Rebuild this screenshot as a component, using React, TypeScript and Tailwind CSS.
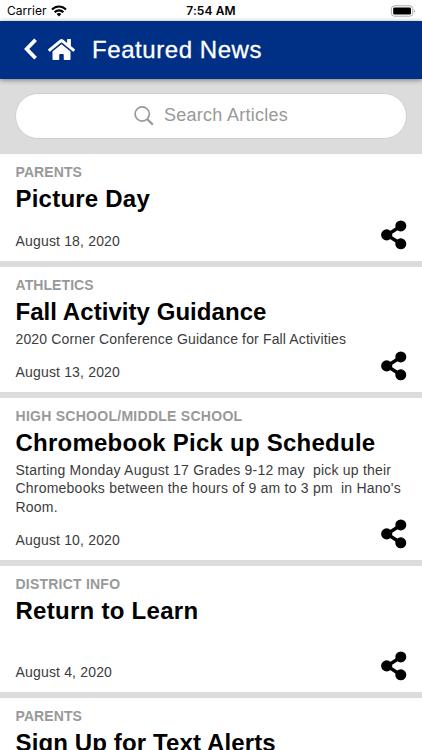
import { FaHome } from "react-icons/fa";

type Article = {
  category: string;
  categoryClass: string;
  title: string;
  titleClass: string;
  lines: { text: string; className: string }[];
  date: string;
  cardClass: string;
};

const articles: Article[] = [
  {
    category: "PARENTS",
    categoryClass: "tracking-[0.1px]",
    title: "Picture Day",
    titleClass: "tracking-[0.22px]",
    lines: [],
    date: "August 18, 2020",
    cardClass: "h-[113px]",
  },
  {
    category: "ATHLETICS",
    categoryClass: "tracking-[0.08px]",
    title: "Fall Activity Guidance",
    titleClass: "tracking-[0.05px]",
    lines: [{ text: "2020 Corner Conference Guidance for Fall Activities", className: "tracking-[0.15px]" }],
    date: "August 13, 2020",
    cardClass: "h-[131px]",
  },
  {
    category: "HIGH SCHOOL/MIDDLE SCHOOL",
    categoryClass: "tracking-[0.27px]",
    title: "Chromebook Pick up Schedule",
    titleClass: "tracking-[0.24px]",
    lines: [
      { text: "Starting Monday August 17 Grades 9-12 may  pick up their", className: "tracking-[0.22px]" },
      { text: "Chromebooks between the hours of 9 am to 3 pm  in Hano's", className: "tracking-[0.22px]" },
      { text: "Room.", className: "tracking-[0.2px]" },
    ],
    date: "August 10, 2020",
    cardClass: "h-[168px]",
  },
  {
    category: "DISTRICT INFO",
    categoryClass: "tracking-[0.22px]",
    title: "Return to Learn",
    titleClass: "tracking-[0.28px]",
    lines: [],
    date: "August 4, 2020",
    cardClass: "h-[131.5px]",
  },
  {
    category: "PARENTS",
    categoryClass: "tracking-[0.1px]",
    title: "Sign Up for Text Alerts",
    titleClass: "tracking-[0.13px]",
    lines: [],
    date: "August 3, 2020",
    cardClass: "h-[131px]",
  },
];

function ShareIcon() {
  return (
    <svg className="h-[30px] w-[28px]" viewBox="0 0 28 30">
      <path d="M21 6 L7 15 L21 24" fill="none" stroke="black" strokeWidth="3.4" />
      <circle cx="20.8" cy="5.9" r="5.5" />
      <circle cx="6.7" cy="14.9" r="5.6" />
      <circle cx="20.8" cy="23.8" r="5.5" />
    </svg>
  );
}

function Card({ article }: { article: Article }) {
  return (
    <article className={"flex shrink-0 flex-col border-b-[6px] border-[#dcdcdc] bg-white pl-[15.5px] pr-[14px] pt-[9px] " + article.cardClass}>
      <div className={"h-[18px] text-[14px] leading-[18px] font-bold text-[#999] " + article.categoryClass}>{article.category}</div>
      <h2 className={"h-[36px] text-[24px] leading-[36px] font-bold whitespace-nowrap text-black " + article.titleClass}>{article.title}</h2>
      {article.lines.map((line) => (
        <p key={line.text} className={"h-[18.4px] text-[14px] leading-[18.4px] whitespace-pre text-[#3c3c3c] " + line.className}>
          {line.text}
        </p>
      ))}
      <div className="mt-auto flex items-end justify-between pb-[11px]">
        <time className="text-[14px] leading-[18px] tracking-[0.17px] text-[#3c3c3c]">{article.date}</time>
        <ShareIcon />
      </div>
    </article>
  );
}

export default function App() {
  return (
    <div className="flex h-[750px] w-[422px] flex-col overflow-hidden bg-white font-['Liberation_Sans',Arial,sans-serif]">
      <div className="grid h-[21px] shrink-0 grid-cols-3 items-center px-[7px] font-['Inter',sans-serif] text-[12px] text-black">
        <div className="flex items-center gap-[4px]">
          <span className="tracking-[0.05px]">Carrier</span>
          <svg className="h-[12px] w-[16px]" viewBox="0 0 16 12">
            <g fill="none" stroke="black" strokeWidth="2.1">
              <path d="M1 4.5 C5 .4 11 .4 15 4.5" />
              <path d="M3.6 7.2 C6.1 4.8 9.9 4.8 12.4 7.2" />
            </g>
            <path d="M5.6 9 C7 7.8 9 7.8 10.4 9 L8 11.5Z" />
          </svg>
        </div>
        <span className="text-center font-semibold tracking-[0.1px]">7:54 AM</span>
        <svg className="h-[12px] w-[26px] justify-self-end" viewBox="0 0 26 12">
          <rect x="2.4" y=".8" width="21.4" height="10.4" rx="3" fill="white" stroke="#aaa" strokeWidth="1" />
          <rect x="4.2" y="2.4" width="17.8" height="7.2" rx="1.4" />
          <path d="M25 4.2 Q26.4 6 25 7.8Z" fill="#777" />
        </svg>
      </div>
      <header className="z-10 flex h-[57.5px] shrink-0 items-center bg-[#002f86] pl-[24px] text-white shadow-[0_1px_5px_rgba(0,0,0,0.45)]">
        <svg className="mb-px h-[22px] w-[14px]" viewBox="0 0 14 22">
          <path d="M11.6 1.8 L2.7 11 L11.6 20.2" fill="none" stroke="white" strokeWidth="3.8" />
        </svg>
        <FaHome className="mb-px ml-[10px] h-[27px] w-[27px]" />
        <h1 className="ml-[17px] text-[24px] leading-[30px] font-normal tracking-[0.56px] [-webkit-text-stroke:0.3px_white]">Featured News</h1>
      </header>
      <div className="h-[75.5px] shrink-0 bg-[#dcdcdc] px-[15px] pt-[14px]">
        <div className="flex h-[46px] items-center justify-center rounded-full border border-[#d0d0d0] bg-white text-[#999]">
          <svg className="h-[20px] w-[20px]" viewBox="0 0 20 20">
            <circle cx="8.2" cy="8" r="7.1" fill="none" stroke="#999" strokeWidth="1.7" />
            <path d="M13 13 L18.8 18.6" stroke="#999" strokeWidth="2.2" />
          </svg>
          <span className="ml-[10px] text-[18px] tracking-[0.28px]">Search Articles</span>
        </div>
      </div>
      {articles.map((article) => (
        <Card key={article.title} article={article} />
      ))}
    </div>
  );
}
